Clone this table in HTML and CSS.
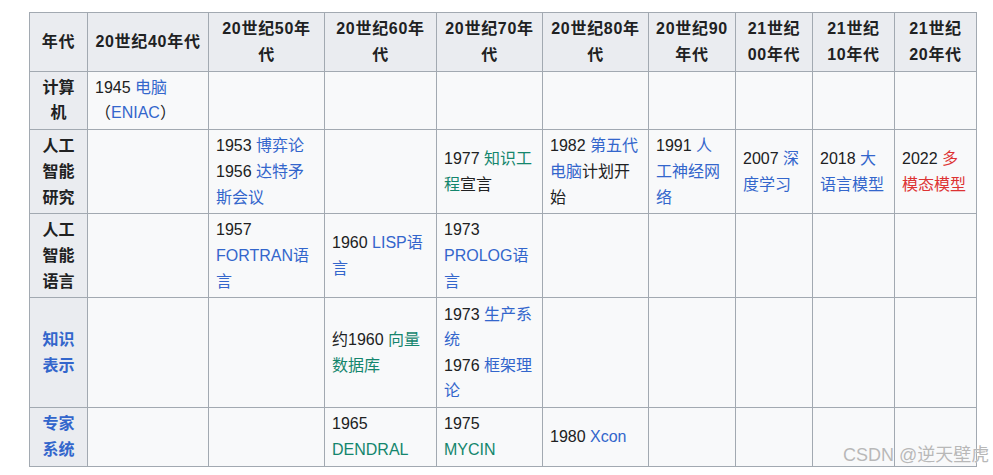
FILE: index.html
```html
<!DOCTYPE html>
<html lang="zh">
<head>
<meta charset="utf-8">
<title>人工智能年表</title>
<link rel="stylesheet" href="styles.css">
</head>
<body>
<div class="page">
<table class="wikitable">
<colgroup>
<col class="c1"><col class="c2"><col class="c3"><col class="c4"><col class="c5"><col class="c6"><col class="c7"><col class="c8"><col class="c9"><col class="c10">
</colgroup>
<thead>
<tr>
<th class="colhead">年代</th>
<th class="colhead">20世纪40年代</th>
<th class="colhead">20世纪50年代</th>
<th class="colhead">20世纪60年代</th>
<th class="colhead">20世纪70年代</th>
<th class="colhead">20世纪80年代</th>
<th class="colhead">20世纪90年代</th>
<th class="colhead">21世纪00年代</th>
<th class="colhead">21世纪10年代</th>
<th class="colhead">21世纪20年代</th>
</tr>
</thead>
<tbody>
<tr>
<th>计算机</th>
<td>1945 <a class="blue">电脑</a>（<a class="blue">ENIAC</a>）</td>
<td></td><td></td><td></td><td></td><td></td><td></td><td></td><td></td>
</tr>
<tr>
<th>人工智能研究</th>
<td></td>
<td><div>1953 <a class="blue">博弈论</a></div><div>1956 <a class="blue">达特矛斯会议</a></div></td>
<td></td>
<td>1977 <a class="green">知识工程</a>宣言</td>
<td>1982 <a class="blue">第五代电脑</a>计划开始</td>
<td>1991 <a class="blue">人工神经网络</a></td>
<td>2007 <a class="blue">深度学习</a></td>
<td>2018 <a class="blue">大语言模型</a></td>
<td>2022 <a class="red">多模态模型</a></td>
</tr>
<tr>
<th>人工智能语言</th>
<td></td>
<td>1957 <a class="blue">FORTRAN语言</a></td>
<td>1960 <a class="blue">LISP语言</a></td>
<td>1973 <a class="blue">PROLOG语言</a></td>
<td></td><td></td><td></td><td></td><td></td>
</tr>
<tr>
<th><a class="blue">知识表示</a></th>
<td></td>
<td></td>
<td>约1960 <a class="green">向量数据库</a></td>
<td><div>1973 <a class="blue">生产系统</a></div><div>1976 <a class="blue">框架理论</a></div></td>
<td></td><td></td><td></td><td></td><td></td>
</tr>
<tr>
<th><a class="blue">专家系统</a></th>
<td></td>
<td></td>
<td>1965 <a class="green">DENDRAL</a></td>
<td>1975 <a class="green">MYCIN</a></td>
<td>1980 <a class="blue">Xcon</a></td>
<td></td><td></td><td></td><td></td>
</tr>
</tbody>
</table>
</div>
<div class="watermark">CSDN @逆天壁虎</div>
</body>
</html>
```
FILE: styles.css
```css
html, body {
  margin: 0;
  padding: 0;
  background: #ffffff;
}
body {
  font-family: "Liberation Sans", "Noto Sans CJK SC", sans-serif;
  font-size: 16px;
  line-height: 1.6;
  color: #202122;
  position: relative;
  width: 993px;
  height: 475px;
  overflow: hidden;
}
.page {
  padding: 12px 0 0 29px;
}
.wikitable {
  border-collapse: collapse;
  table-layout: fixed;
  width: 947px;
  background: #f8f9fa;
  border: 1px solid #a2a9b1;
}
.c1 { width: 58px; }
.c2 { width: 121px; }
.c3 { width: 116px; }
.c4 { width: 112px; }
.c5 { width: 106px; }
.c6 { width: 106px; }
.c7 { width: 87px; }
.c8 { width: 77px; }
.c9 { width: 82px; }
.c10 { width: 82px; }
.wikitable th,
.wikitable td {
  border: 1px solid #a2a9b1;
  vertical-align: middle;
}
.wikitable td {
  padding: 3.2px 8px 3.2px 7px;
  text-align: left;
}
.wikitable th {
  background: #eaecf0;
  padding: 3.2px 6px;
  text-align: center;
  font-weight: bold;
}
.wikitable th.colhead {
  letter-spacing: 0.7px;
}
a {
  text-decoration: none;
}
.blue { color: #3366cc; }
.green { color: #14866d; }
.red { color: #dd3333; }
.watermark {
  position: absolute;
  left: 843px;
  top: 446px;
  font-size: 18px;
  line-height: 1;
  color: #b8b8b8;
  text-shadow: 0 0 1px #ffffff;
  white-space: nowrap;
}
```
